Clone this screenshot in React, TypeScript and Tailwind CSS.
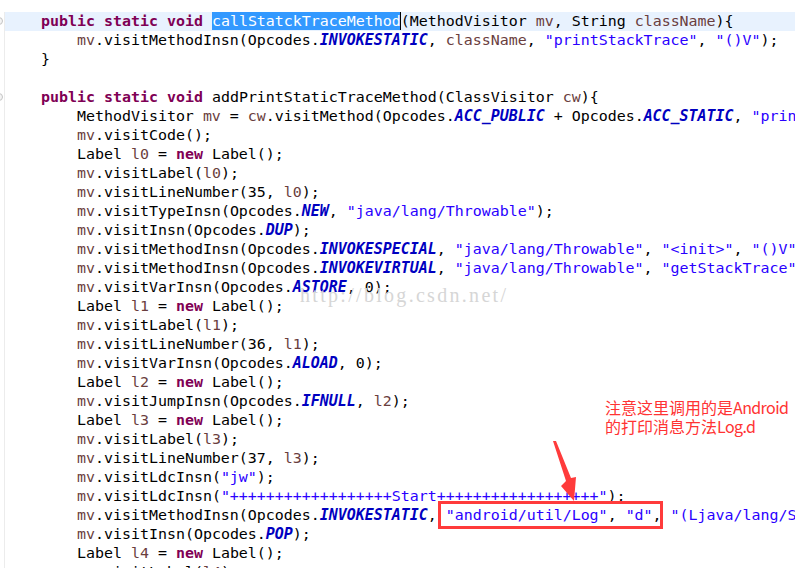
import type { ReactNode } from 'react'

const KEYWORDS = new Set(['public', 'static', 'void', 'new', 'false', 'true', 'null'])
const LOCALS = new Set(['mv', 'cw', 'className', 'l0', 'l1', 'l2', 'l3', 'l4'])

/** Eclipse-ish Java colouring: keywords, strings, static constants, locals. */
function Java({ src }: { src: string }) {
  const out: ReactNode[] = []
  const re = /("(?:[^"\\]|\\.)*"?)|([A-Za-z_][A-Za-z0-9_]*)|([^"A-Za-z_]+)/g
  let m: RegExpExecArray | null
  let i = 0
  while ((m = re.exec(src))) {
    const [tok, str, id] = m
    let cls = 'text-black'
    if (str) cls = 'text-[#2a00ff]'
    else if (id && KEYWORDS.has(id)) cls = 'font-bold text-[#7f0055]'
    else if (id && /^[A-Z][A-Z_]+$/.test(id)) cls = 'font-bold italic text-[#0000c0]'
    else if (id && LOCALS.has(id)) cls = 'text-[#6a3e3e]'
    out.push(
      <span key={i++} className={cls}>
        {tok}
      </span>,
    )
  }
  return <>{out}</>
}

const I1 = '    '
const I2 = '        '

const LINES: ReactNode[] = [
  <>
    <Java src={`${I1}public static void `} />
    <span className="bg-[#3399ff] text-white">callStatckTraceMethod</span>
    <span className="-ml-px border-l-[1.5px] border-black" />
    <Java src="(MethodVisitor mv, String className){" />
  </>,
  <Java src={`${I2}mv.visitMethodInsn(Opcodes.INVOKESTATIC, className, "printStackTrace", "()V");`} />,
  <Java src={`${I1}}`} />,
  '',
  <Java src={`${I1}public static void addPrintStaticTraceMethod(ClassVisitor cw){`} />,
  <Java src={`${I2}MethodVisitor mv = cw.visitMethod(Opcodes.ACC_PUBLIC + Opcodes.ACC_STATIC, "printStaticTrace", "()V", null, null);`} />,
  <Java src={`${I2}mv.visitCode();`} />,
  <Java src={`${I2}Label l0 = new Label();`} />,
  <Java src={`${I2}mv.visitLabel(l0);`} />,
  <Java src={`${I2}mv.visitLineNumber(35, l0);`} />,
  <Java src={`${I2}mv.visitTypeInsn(Opcodes.NEW, "java/lang/Throwable");`} />,
  <Java src={`${I2}mv.visitInsn(Opcodes.DUP);`} />,
  <Java src={`${I2}mv.visitMethodInsn(Opcodes.INVOKESPECIAL, "java/lang/Throwable", "<init>", "()V", false);`} />,
  <Java src={`${I2}mv.visitMethodInsn(Opcodes.INVOKEVIRTUAL, "java/lang/Throwable", "getStackTrace", "()[Ljava/lang/StackTraceElement;", false);`} />,
  <Java src={`${I2}mv.visitVarInsn(Opcodes.ASTORE, 0);`} />,
  <Java src={`${I2}Label l1 = new Label();`} />,
  <Java src={`${I2}mv.visitLabel(l1);`} />,
  <Java src={`${I2}mv.visitLineNumber(36, l1);`} />,
  <Java src={`${I2}mv.visitVarInsn(Opcodes.ALOAD, 0);`} />,
  <Java src={`${I2}Label l2 = new Label();`} />,
  <Java src={`${I2}mv.visitJumpInsn(Opcodes.IFNULL, l2);`} />,
  <Java src={`${I2}Label l3 = new Label();`} />,
  <Java src={`${I2}mv.visitLabel(l3);`} />,
  <Java src={`${I2}mv.visitLineNumber(37, l3);`} />,
  <Java src={`${I2}mv.visitLdcInsn("jw");`} />,
  <Java src={`${I2}mv.visitLdcInsn("++++++++++++++++++Start++++++++++++++++++");`} />,
  <>
    <Java src={`${I2}mv.visitMethodInsn(Opcodes.INVOKESTATIC, `} />
    <span className="relative">
      <Java src={`"android/util/Log", "d",`} />
      <span className="absolute -top-[5px] -bottom-[5px] -left-[8px] -right-px border-[3px] border-[#ff3b3b]" />
    </span>
    <Java src={` "(Ljava/lang/String;Ljava/lang/String;)I", false);`} />
  </>,
  <Java src={`${I2}mv.visitInsn(Opcodes.POP);`} />,
  <Java src={`${I2}Label l4 = new Label();`} />,
  <Java src={`${I2}mv.visitLabel(l4);`} />,
]

export default function App() {
  return (
    <div className="relative h-[568px] w-[795px] overflow-hidden bg-white pt-[12px] font-['DejaVu_Sans_Mono',monospace] text-[14.95px]">
      {LINES.map((line, i) => (
        <div key={i} className="flex h-[19px] leading-[19px]">
          <div className="relative w-[5px] shrink-0 border-r border-[#ececec]">
            {(i === 0 || i === 4) && (
              <span className="absolute -left-[5px] top-[5px] size-[8px] rounded-full border border-[#c4c4c4] bg-[#f4f4f4]" />
            )}
          </div>
          <div className={`flex-1 whitespace-pre ${i === 0 ? 'bg-[#e8f2fe]' : ''}`}>{line}</div>
        </div>
      ))}

      {/* blog watermark */}
      <div className="absolute left-[300px] top-[285px] font-['Liberation_Serif',serif] text-[20px] leading-none tracking-[2.3px] text-[#d6d6d6]">
        http://blog.csdn.net/
      </div>

      {/* annotation */}
      <div className="absolute left-[605px] top-[398px] font-['Noto_Sans_CJK_SC',sans-serif] text-[16px] leading-[19px] text-[#ff3333]">
        <div>
          注意这里调用的是<span className="tracking-[-0.6px]">Android</span>
        </div>
        <div>
          的打印消息方法<span className="tracking-[-0.6px]">Log.d</span>
        </div>
      </div>
      <svg className="absolute left-0 top-0" width={795} height={568} aria-hidden>
        <polygon points="553,441 556,441 571,478 576,477 574,501 561,486 566,481" fill="#ff3b3b" />
      </svg>
    </div>
  )
}
